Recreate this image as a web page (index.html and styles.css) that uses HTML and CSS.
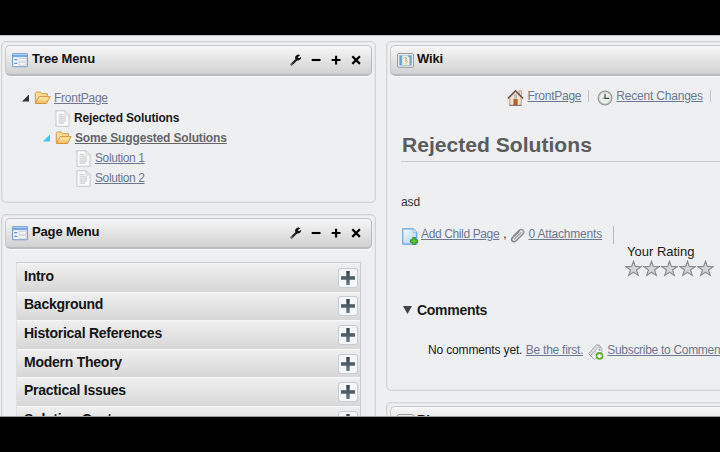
FILE: index.html
```
<!DOCTYPE html>
<html lang="en">
<head>
<meta charset="utf-8">
<title>Wiki</title>
<link rel="stylesheet" href="styles.css">
</head>
<body>
<svg class="defs" aria-hidden="true">
  <defs>
    <linearGradient id="gold" x1="0" y1="0" x2="0" y2="1"><stop offset="0" stop-color="#fff0b8"/><stop offset="1" stop-color="#f3b858"/></linearGradient>
    <linearGradient id="blue" x1="0" y1="0" x2="1" y2="1"><stop offset="0" stop-color="#fafdff"/><stop offset="1" stop-color="#a6cff6"/></linearGradient>
    <linearGradient id="slate" x1="0" y1="0" x2="0" y2="1"><stop offset="0" stop-color="#333f48"/><stop offset="1" stop-color="#697b88"/></linearGradient>
  </defs>
  <symbol id="form" viewBox="0 0 16 15">
    <rect x=".6" y=".8" width="14.8" height="13" rx=".8" fill="#f4f8fc" stroke="#7599ca" stroke-width="1.1"/>
    <path d="M.5.5h15v3.7H.5z" fill="#7aa9e3"/><path d="M1 1.5h14" stroke="#a9cbf1"/>
    <path d="M2.3 6.6h3M2.3 10.4h3" stroke="#5d8fda" stroke-width="1.3"/>
    <path d="M7 5.6h7v2.6H7zM7 9.6h7v2.6H7z" fill="#fff" stroke="#c3c6cb" stroke-width=".8"/>
  </symbol>
  <symbol id="folder" viewBox="0 0 17 14">
    <path d="M1.3 11.7V2.4L2.4 1h4l1.3 1.7h5.6v3" fill="#fbdc98" stroke="#d39a48"/>
    <path d="M1.3 12.5 5 5.6h11.2l-3.8 6.9z" fill="url(#gold)" stroke="#d3953e" stroke-linejoin="round"/>
  </symbol>
  <symbol id="doc" viewBox="0 0 16 18">
    <path d="M1 .8h9.5L15 5.2v12H1z" fill="#fbfbfb" stroke="#c6c8ca" stroke-width="1.1"/>
    <path d="M10.5 1v4.3H15" fill="#ececec" stroke="#cfd1d3" stroke-width=".8"/>
    <path d="M3.8 5h5M3.8 7.3h8M3.8 9.5h8M3.8 11.7h8M3.8 13.9h6" stroke="#bbbdbf"/>
  </symbol>
  <symbol id="wrench" viewBox="0 0 12 12">
    <path d="M1.6 10.5 6.8 5.2" stroke="#222" stroke-width="2.3" stroke-linecap="round"/>
    <path d="M10.1 1.2A3.2 3.2 0 0 0 5.2 4.6a3.1 3.1 0 0 0 5.9-1.7L8.9 4.3 7.7 3.2z" fill="#111"/>
    <circle cx="1.9" cy="10.1" r=".7" fill="#ccc"/>
  </symbol>
  <symbol id="minus" viewBox="0 0 12 12"><path d="M1.7 6h8.8" stroke="#000" stroke-width="2.1"/></symbol>
  <symbol id="plus" viewBox="0 0 12 12"><path d="M1.7 6h8.8M6.1 1.7v8.7" stroke="#000" stroke-width="2.1"/></symbol>
  <symbol id="close" viewBox="0 0 12 12"><path d="m2.3 2.3 7.6 7.6M9.9 2.3 2.3 9.9" stroke="#000" stroke-width="2.2"/></symbol>
  <symbol id="book" viewBox="0 0 17 15">
    <rect x=".6" y=".6" width="15.8" height="13.6" rx="1" fill="#f5f5f5" stroke="#909293"/>
    <path d="M2.3 2.3h12.4v10.2H2.3z" fill="#67a2d7"/>
    <path d="M5.2 2.7h5l2.2 2v7.2H5.2z" fill="#f5f1df" stroke="#d8d6c8" stroke-width=".5"/>
    <path d="m6.6 5 2.8-.4-1 2.2 2.4 1.6-2.2 2.5" fill="none" stroke="#a8bd83" stroke-width="1"/><path d="m9.8 5.2-1.7 3.5" stroke="#dba2a0" stroke-width=".8"/>
  </symbol>
  <symbol id="home" viewBox="0 0 18 18">
    <path d="M12.8 1.4h2.5v5h-2.5z" fill="#eee1d6" stroke="#ab8c77" stroke-width=".7"/>
    <path d="M3 8.5 9 2.6l6 5.9v8.3H3z" fill="#f8e2cb" stroke="#a68671" stroke-width=".8"/>
    <path d="M.8 9.5 9 1.4l8.2 8.1" fill="none" stroke="#684f48" stroke-width="1.5"/>
    <path d="M7.2 10.2h3.7v6.7H7.2z" fill="#b8652f" stroke="#834724" stroke-width=".5"/>
    <path d="M8 5.6h2v3H8z" fill="#bad5ea" stroke="#8b96a3" stroke-width=".5"/><path d="M2.5 16.8h13" stroke="#856d62"/>
  </symbol>
  <symbol id="clock" viewBox="0 0 16 16">
    <circle cx="8" cy="8" r="6.8" fill="#eaf0ea" stroke="#969b98" stroke-width="1.3"/>
    <circle cx="8" cy="8" r="5.6" fill="none" stroke="#c7d4ca" stroke-width=".8"/>
    <path d="M8 3.8v4.6h4.2" fill="none" stroke="#424845" stroke-width="1.2"/><path d="m5.4 8.2 2.6.2" stroke="#777" stroke-width=".8"/>
  </symbol>
  <symbol id="addpage" viewBox="0 0 16 17">
    <path d="M.8.8h10.5l3.4 3.5v11.8H.8z" fill="url(#blue)" stroke="#65a2e0" stroke-width="1.2" stroke-linejoin="round"/>
    <path d="M11.2 1v3.5h3.4" fill="#eaf5ff" stroke="#82b5e8" stroke-width=".7"/>
    <path d="M10.8 9.6h2.6v2.2h2.2v2.6h-2.2v2.2h-2.6v-2.2H8.6v-2.6h2.2z" fill="#61cc27" stroke="#258413" stroke-width=".9"/>
  </symbol>
  <symbol id="clip" viewBox="0 0 16 16">
    <g fill="none" stroke-linecap="round" stroke-linejoin="round">
      <path d="M4.2 8.4 10 2.6a2.6 2.6 0 0 1 3.8 3.6L6.1 13.8a2.4 2.4 0 0 1-3.6-3.3L9.6 3.7" stroke="#818385" stroke-width="1.7"/>
      <path d="M4.6 11.8 11.6 5" stroke="#98999b" stroke-width="1.3"/>
      <path d="M10.5 2.7a2 2 0 0 1 3 3.1L5.9 13.4" stroke="#d2d3d4" stroke-width=".7"/>
    </g>
  </symbol>
  <symbol id="tag" viewBox="0 0 17 18">
    <path d="M.8 10.8 8.9 1.4l3.2.3 1.5 2.6-7.8 11.9z" fill="#dedfe0" stroke="#9b9d9f"/>
    <path d="m2.7 12.8 8.5-9.3 3.5 1.4v4L7.2 17z" fill="#f5f6f6" stroke="#a0a2a4" stroke-width=".9"/>
    <path d="m5.3 11.9 4-4.3M7 13.1l3.5-3.8" stroke="#b5b8ba"/><circle cx="12.3" cy="6.6" r="1.1" fill="#5da1d3"/>
    <circle cx="12.2" cy="13.2" r="4.1" fill="#67af3b"/><path d="M12.2 11.1v4.2m-2.1-2.1h4.2" stroke="#fff" stroke-width="2"/>
  </symbol>
  <symbol id="star" viewBox="0 0 17 17">
    <path d="m8.5 1.3 1.8 5.2 5.8.1-4.6 3.3 1.7 5.5-4.7-3.2-4.7 3.2 1.7-5.5L.9 6.6l5.8-.1z" fill="#d5d6d7" stroke="#8b8d8e" stroke-width="1.2"/>
  </symbol>
  <symbol id="bigplus" viewBox="0 0 16 16"><path d="M6.3 1h3.4v5.3H15v3.4H9.7V15H6.3V9.7H1V6.3h5.3z" fill="url(#slate)"/></symbol>
</svg>
<main class="screen">
  <div class="column side">
    <section class="panel tree-panel">
      <header class="bar">
        <svg class="i-form"><use href="#form"/></svg><h2>Tree Menu</h2>
        <div class="tools"><svg><use href="#wrench"/></svg><svg><use href="#minus"/></svg><svg><use href="#plus"/></svg><svg><use href="#close"/></svg></div>
      </header>
      <ul class="tree">
        <li><span class="arrow"></span><svg class="i-folder"><use href="#folder"/></svg><a class="front">FrontPage</a></li>
        <li class="child"><svg class="i-doc"><use href="#doc"/></svg><b>Rejected Solutions</b></li>
        <li class="branch"><span class="arrow cyan"></span><svg class="i-folder"><use href="#folder"/></svg><a class="strong">Some Suggested Solutions</a></li>
        <li class="leaf"><svg class="i-doc"><use href="#doc"/></svg><a>Solution 1</a></li>
        <li class="leaf"><svg class="i-doc"><use href="#doc"/></svg><a>Solution 2</a></li>
      </ul>
    </section>
    <section class="panel">
      <header class="bar">
        <svg class="i-form"><use href="#form"/></svg><h2>Page Menu</h2>
        <div class="tools"><svg><use href="#wrench"/></svg><svg><use href="#minus"/></svg><svg><use href="#plus"/></svg><svg><use href="#close"/></svg></div>
      </header>
      <div class="accordion">
        <div class="item"><span>Intro</span><i><svg><use href="#bigplus"/></svg></i></div>
        <div class="item"><span>Background</span><i><svg><use href="#bigplus"/></svg></i></div>
        <div class="item"><span>Historical References</span><i><svg><use href="#bigplus"/></svg></i></div>
        <div class="item"><span>Modern Theory</span><i><svg><use href="#bigplus"/></svg></i></div>
        <div class="item"><span>Practical Issues</span><i><svg><use href="#bigplus"/></svg></i></div>
        <div class="item"><span>Solution Costs</span><i><svg><use href="#bigplus"/></svg></i></div>
      </div>
    </section>
  </div>
  <div class="column content">
    <section class="panel wiki">
      <header class="bar"><svg class="i-book"><use href="#book"/></svg><h2>Wiki</h2></header>
      <nav class="topnav">
        <svg class="i-home"><use href="#home"/></svg><a class="front">FrontPage</a><span class="sep"></span>
        <svg class="i-clock"><use href="#clock"/></svg><a class="recent">Recent Changes</a><span class="sep"></span>
      </nav>
      <h1>Rejected Solutions</h1>
      <p class="text">asd</p>
      <div class="actions">
        <svg class="i-add"><use href="#addpage"/></svg><a class="add">Add Child Page</a><span class="comma">,</span>
        <svg class="i-clip"><use href="#clip"/></svg><a class="attach">0 Attachments</a><span class="divider"></span>
      </div>
      <div class="rating"><span>Your Rating</span>
        <div class="stars"><svg><use href="#star"/></svg><svg><use href="#star"/></svg><svg><use href="#star"/></svg><svg><use href="#star"/></svg><svg><use href="#star"/></svg></div>
      </div>
      <h3><span class="down"></span>Comments</h3>
      <div class="comments"><span class="none">No comments yet.</span><a class="first">Be the first.</a><svg class="i-tag"><use href="#tag"/></svg><a class="subscribe">Subscribe to Comments</a></div>
    </section>
    <section class="panel">
      <header class="bar"><svg class="i-book"><use href="#book"/></svg><h2>Blogs</h2></header>
    </section>
  </div>
</main>
</body>
</html>
```

FILE: styles.css
```
* { box-sizing: border-box; }
body { margin: 0; height: 452px; padding: 35px 0; background: #000; overflow: hidden; font: 12px/16px "Liberation Sans", Arial, sans-serif; color: #1b1b1b; white-space: nowrap; }
.defs { position: absolute; width: 0; height: 0; }
svg { display: block; flex: none; }
h1, h2, h3, p, ul { margin: 0; padding: 0; }
a { color: #6d7892; text-decoration: underline; text-underline-offset: 1px; letter-spacing: -.25px; }
.screen { height: 381.5px; overflow: hidden; display: flex; gap: 10px; padding: 5px 0 0 1px; background: #eeeff1; border-top: 1px solid #bfc0c1; border-bottom: 1px solid #999; }
.column { display: flex; flex-direction: column; gap: 11px; flex: none; }
.side { width: 375px; }
.content { width: 440px; }
.panel { flex: none; border: 1px solid #d1d3d5; border-radius: 5px; padding: 3px; box-shadow: inset 0 0 0 .5px #dddfe1; }
.tree-panel { height: 162px; }
.bar { height: 31px; display: flex; align-items: center; padding: 0 9px 0 6px; border: 1px solid #c7c8ca; border-bottom: 2px solid #b9babb; border-right-color: #b8b9bb; border-radius: 5px; background: linear-gradient(#f7f7f7, #d1d1d1); box-shadow: 0 1px 0 #fafafa; }
h2 { margin: -3px 0 0 4px; font-size: 13px; line-height: 18px; color: #111; letter-spacing: -.15px; }
.tools { margin-left: auto; display: flex; gap: 8px; }
.tools svg { width: 12px; height: 12px; }
.i-form { width: 16px; height: 15px; }
.i-book { width: 17px; height: 15px; margin: 1px -1px 0 0; }
.tree { list-style: none; padding: 12px 0 0 17px; }
.tree li { height: 20px; display: flex; align-items: center; }
.tree a, .tree b { margin-left: 4px; }
.tree b { letter-spacing: -.15px; }
.tree .strong { font-weight: bold; color: #666; letter-spacing: -.15px; margin-left: 3px; }
.tree .child { padding-left: 33px; }
.tree .child b { margin-left: 4px; }
.tree .branch { padding-left: 21px; }
.tree .leaf { padding-left: 54px; }
.tree .leaf a { letter-spacing: -.38px; }
.arrow { width: 7px; height: 7px; background: #333; clip-path: polygon(100% 0, 100% 100%, 0 100%); margin-right: 5px; }
.arrow.cyan { background: #35c6f2; }
.i-folder { width: 17px; height: 14px; }
.tree .front { margin-left: 3px; }
.i-doc { width: 15px; height: 17px; }
.accordion { margin: 13px 11px 0 11px; border: 1px solid #c9cdd0; border-left-color: #dddfe1; }
.item { height: 28.6px; display: flex; align-items: center; justify-content: space-between; padding: 0 2.5px 0 7px; background: linear-gradient(#efefef, #d7d7d7); border-top: 1px solid #f8f8f8; font-weight: bold; font-size: 14px; letter-spacing: -.25px; color: #151515; }
.item i { width: 20px; height: 20px; display: grid; place-items: center; background: #f5f6f7; border: 1px solid #c4cdd3; border-radius: 3px; }
.item span { margin-top: -4px; }
.item svg { width: 16px; height: 16px; }
.wiki { height: 350px; }
.topnav { height: 17px; margin: 12px 0 0 117px; display: flex; align-items: flex-start; }
.topnav a { margin-left: 3.5px; }
.topnav a.recent { margin-left: 3px; letter-spacing: -.2px; }
.i-home { width: 17px; height: 18px; margin-top: 1px; }
.i-clock { width: 16px; height: 16px; margin: 2px 0 0 8px; }
.sep { width: 1px; height: 12px; margin: 2px 0 0 7px; background: #c2c5c8; }
h1 { margin: 27px 0 0 11px; padding-left: 1px; height: 30px; border-bottom: 1px solid #c7c9cb; font-size: 21.1px; line-height: 26px; color: #5b5c5d; }
.text { margin: 32px 0 0 11px; font-size: 12px; letter-spacing: -.1px; color: #333; }
.actions { height: 20px; margin: 16px 0 0 12px; display: flex; align-items: flex-start; }
.actions .add { letter-spacing: -.37px; }
.actions .attach { letter-spacing: -.2px; }
.i-add { width: 16px; height: 17px; margin: 2px 3px 0 0; }
.comma { margin: 0 4px 0 4px; }
.i-clip { width: 15px; height: 15px; margin: 2px 4px 0 -1px; }
.divider { width: 1px; height: 18px; margin-left: 11px; background: #b5b7ba; }
.rating { margin: -2px 0 0 237px; font-size: 13px; }
.stars { display: flex; gap: 1px; margin-left: -2px; }
.stars svg { width: 17px; height: 17px; }
h3 { display: flex; align-items: center; gap: 5px; margin: 24px 0 0 13px; font-size: 14px; line-height: 18px; letter-spacing: -.28px; }
.down { width: 9px; height: 8px; background: #444; clip-path: polygon(0 0, 100% 0, 50% 100%); }
.comments { display: flex; align-items: flex-start; margin: 23px 0 0 38px; }
.none { letter-spacing: -.15px; }
.first { margin-left: 3.5px; }
.subscribe { letter-spacing: -.3px; }
.i-tag { width: 16px; height: 18px; margin: 1px 3px 0 5px; }
```
